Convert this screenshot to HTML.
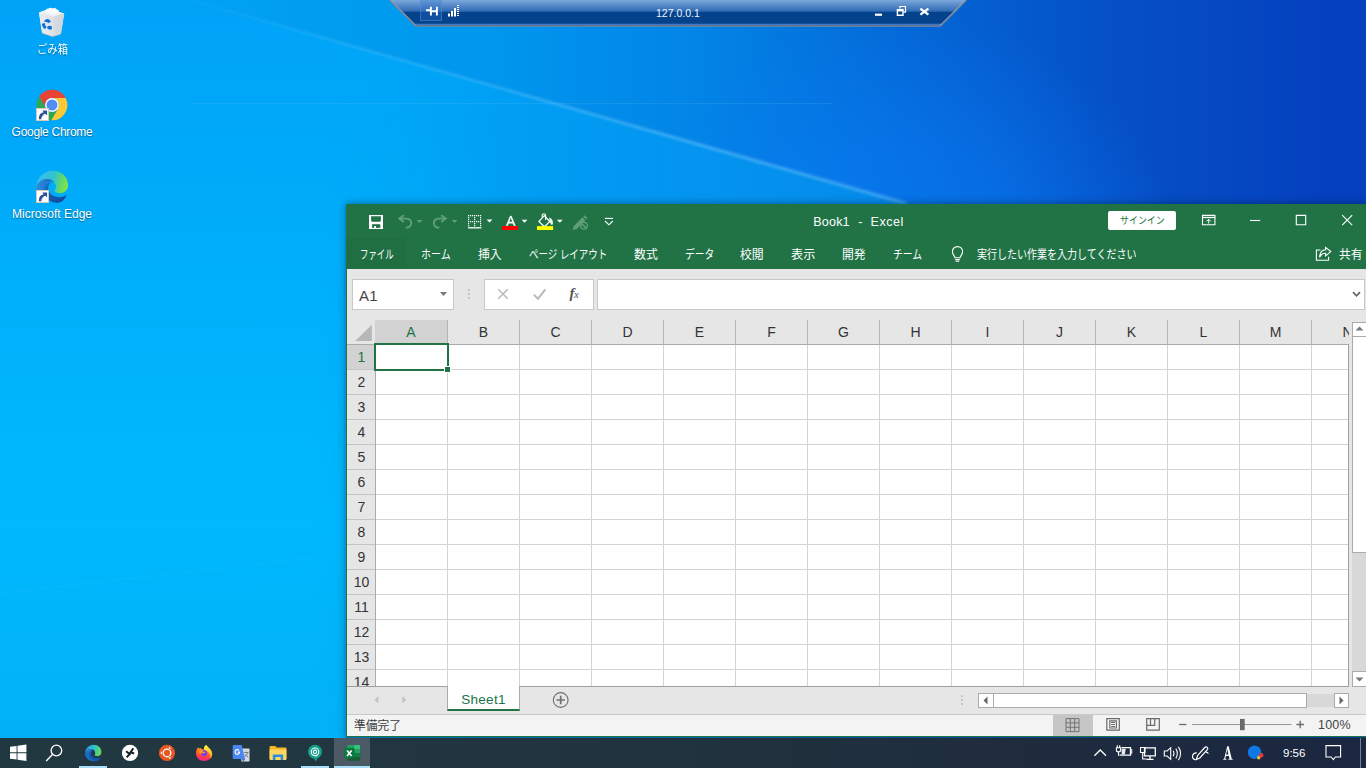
<!DOCTYPE html>
<html lang="ja">
<head>
<meta charset="utf-8">
<title>Book1 - Excel</title>
<style>
html,body{margin:0;padding:0}
body{width:1366px;height:768px;overflow:hidden;position:relative;background:#0790ea;
  font-family:"Liberation Sans",sans-serif;font-size:12px;color:#fff}
.abs{position:absolute}
svg{display:block;overflow:visible}
.jp{pointer-events:none}
.jp text{font-family:"Liberation Sans","Noto Sans CJK JP",sans-serif}
/* ---------- wallpaper ---------- */
#wall{left:0;top:0;width:1366px;height:768px;
  background:linear-gradient(90deg,#00a7f6 0,#00a7f6 25.3%,#009ff4 36.6%,#0494f0 51.2%,#058aea 66%,#058aea 100%)}
#wallL{left:0;top:0;width:520px;height:768px;-webkit-mask-image:linear-gradient(90deg,#000 0,#000 60%,transparent 100%);mask-image:linear-gradient(90deg,#000 0,#000 60%,transparent 100%);
  background:linear-gradient(180deg,#00a2f6 0,#00a4f8 30px,#00a9f9 156px,#00aefa 246px,#00b6fc 446px,#00b8fe 526px,#02b2f6 706px,#02b1f5 768px)}
#wallU{left:0;top:0;width:1366px;height:204px;clip-path:polygon(191px 0,1366px 0,1366px 204px,911px 204px);
  background:radial-gradient(circle at 900px 300px,rgba(10,130,255,.55) 0,rgba(10,130,255,.4) 150px,rgba(10,130,255,0) 290px),
  linear-gradient(90deg,#00a2f6 0,#00a2f6 14%,#009ef0 22%,#0096ee 36.6%,#0284e6 51.2%,#0468d6 65.9%,#0551c7 80.5%,#0540be 97.6%,#0540be 100%)}
/* ---------- remote-desktop connection bar ---------- */
#rdp{left:390px;top:0;width:576px;height:27px}
#rdp .t{font-size:10.5px;color:#eef4ff;left:266px;top:7px;line-height:12px;white-space:nowrap}
/* ---------- desktop icons ---------- */
.dlabel{color:#fff;font-size:12px;line-height:14px;white-space:nowrap;text-shadow:0 1px 1px rgba(0,0,0,.35),0 0 2px rgba(0,0,0,.18)}
/* ---------- excel ---------- */
#xl{left:346px;top:204px;width:1020px;height:534px;background:#e6e6e6;box-shadow:0 0 8px rgba(0,0,0,.4);color:#444}
#xl .green{left:0;top:0;width:1020px;height:65px;background:#217346}
#xl .filetab{left:0;top:34px;width:61px;height:31px;background:#1f6f43}
#xl .ttl{color:#fff;font-size:12.6px;line-height:16px;top:9.5px;white-space:nowrap}
#xl .signin{left:762px;top:7px;width:68px;height:19px;background:#fff;border-radius:2px}
.box{background:#fff;border:1px solid #c8c8c8;box-sizing:border-box}
#grid{left:1px;top:116px;width:1002px;height:367px;background:#fff;overflow:hidden}
.colh{top:0;height:24px;width:72px;text-align:center;font-size:14px;line-height:25px;color:#333;border-right:1px solid #b4b4b4;box-sizing:border-box}
.rowh{left:0;width:29px;height:25px;text-align:center;font-size:14px;line-height:24px;color:#333;border-bottom:1px solid #c4c4c4;box-sizing:border-box;background:#e6e6e6}
/* ---------- taskbar ---------- */
#tb{left:0;top:738px;width:1366px;height:30px;background:linear-gradient(90deg,#223841 0,#213640 30%,#20323d 52%,#1f2c3e 75%,#1b2640 100%)}
.ind{top:28px;height:2px;background:#a8defa}
</style>
</head>
<body>
<!-- ===== wallpaper ===== -->
<div id="wall" class="abs">
<div id="wallL" class="abs"></div>
<div id="wallU" class="abs"></div>
<svg class="abs" style="left:0;top:0" width="1366" height="768" viewBox="0 0 1366 768">
<defs>
<linearGradient id="wr1" gradientUnits="userSpaceOnUse" x1="190" y1="0" x2="900" y2="200"><stop offset="0" stop-color="#7fd0ff" stop-opacity=".05"/><stop offset=".25" stop-color="#7fd0ff" stop-opacity=".22"/><stop offset=".7" stop-color="#8fd0ff" stop-opacity=".34"/><stop offset="1" stop-color="#8fd0ff" stop-opacity=".3"/></linearGradient>
</defs>
<!-- main light ray -->
<polygon points="186.500,0 195,0 909.500,202 902,204.500" fill="url(#wr1)" style="filter:blur(1.300px)"/>
<!-- faint secondary rays -->
<rect x="192" y="103" width="640" height="1.2" fill="#8fd6ff" opacity=".13"/>
<polygon points="0,592 346,553 346,555 0,594.5" fill="#7fd8ff" opacity=".05"/>
</svg>
</div>
<div id="rdp" class="abs">
<svg class="abs" style="left:0;top:0" width="576" height="27" viewBox="0 0 576 27">
<defs>
<linearGradient id="rg" x1="0" y1="0" x2="0" y2="1"><stop offset="0" stop-color="#7ba8dc"/><stop offset="1" stop-color="#2d68b2"/></linearGradient>
</defs>
<polygon points="0,0 576,0 550,26 26,26" fill="#05428c"/>
<polygon points="0,0 576,0 564.3,11.7 11.7,11.7" fill="url(#rg)"/>
<path d="M24.300 24.300h527.400" stroke="#4f86d2" stroke-width="1" fill="none"/>
<path d="M-.4 0l26 26h524.800l26-26" stroke="#7d8795" stroke-width="1.300" fill="none"/>
<path d="M.9 0l25.300 25.300M575.100 0l-25.300 25.300" stroke="#9db4d6" stroke-width=".8" fill="none" opacity=".7"/>
<!-- pin button -->
<rect x="30.5" y="-1" width="21" height="21.5" fill="#2a72cc" fill-opacity=".3" stroke="#4f8fdc" stroke-opacity=".55"/>
<path d="M36 10.2h4.2M40.9 6.8v8.6M46.9 6.8v8.6M41 11.2h6" stroke="#fff" stroke-width="1.9" fill="none"/>
<!-- signal bars -->
<path d="M58 13.5h2v3h-2zM61 11h2v5.5h-2zM64 8h2v8.5h-2z" fill="#fff"/>
<path d="M68 5v11.5" stroke="#fff" stroke-width="2" stroke-dasharray="1 1" fill="none"/>
<!-- window buttons -->
<rect x="485" y="13.6" width="7" height="2.2" fill="#fff"/>
<path d="M507.4 9.6h5.6v5.6h-5.6z" fill="none" stroke="#fff" stroke-width="1.4"/><path d="M507.4 10.400h5.6" stroke="#fff" stroke-width="2"/>
<path d="M510 8.4V6.5h5.5v5.6h-2" fill="none" stroke="#fff" stroke-width="1.2"/>
<path d="M530.4 8.6l8 6M538.4 8.6l-8 6" stroke="#fff" stroke-width="2.3" fill="none"/>
</svg>
<div class="abs t">127.0.0.1</div>
</div>
<!-- ===== desktop icons ===== -->
<svg class="abs" style="left:36px;top:6px" width="32" height="32" viewBox="0 0 32 32" aria-label="Recycle Bin">
<defs><linearGradient id="binL" x1="0" y1="0" x2="1" y2="0"><stop offset="0" stop-color="#e9edf0"/><stop offset="1" stop-color="#dde2e6"/></linearGradient>
<linearGradient id="binR" x1="0" y1="0" x2="1" y2="0"><stop offset="0" stop-color="#d9dee3"/><stop offset="1" stop-color="#ccd3d9"/></linearGradient></defs>
<path d="M3 6.400L12.500 3l15.700 4.400-3.300 20.600-8.200 2.600-10.600-3.500z" fill="#e8ecef"/>
<path d="M3 6.400L12.500 3l15.700 4.400-11.100 3.300z" fill="#eef1f3"/>
<path d="M9.800 5.600c-.6-2 1-3.400 2.800-3 .8-1.200 3-1.300 3.900-.2 1.600-1 3.800-.5 4.200 1.200 1.600-.1 2.600 1 2.300 2.300l-6 2.600z" fill="#fbfcfd"/>
<path d="M3 6.400l14.100 4.300-.4 19.900-10.600-3.500z" fill="url(#binL)"/>
<path d="M17.100 10.700l11.100-3.300-3.300 20.600-8.200 2.600z" fill="url(#binR)"/>
<path d="M6.100 27.100l10.600 3.500 8.200-2.600" stroke="#c9b49c" stroke-width=".7" fill="none" opacity=".55"/>
<g fill="#1270d8"><path d="M8 15.600c.7-2 2.700-3 4.500-2.400 1.100.4 2 1.300 2.400 2.500l-2.900 1.500c-.3-.9-1-1.400-1.800-1.200z"/><path d="M5.900 17.800l3-.9c0 1.700.6 3.100 1.700 4.100l-1.800 2.200c-1.900-1.200-2.900-3.200-2.900-5.400z"/><path d="M10.800 21.300l2.300-1.800c.7.700 1.600.8 2.500.2l.4 3.400c-1.900 1.100-4 .6-5.200-1.800z"/></g>
</svg>
<svg class="abs jp" style="left:34.800px;top:40.800px;filter:drop-shadow(0 1px 1px rgba(0,0,0,.35))" width="35" height="16" viewBox="0 0 35 16" role="img" aria-label="ごみ箱"><text x="2" y="13" font-size="12" fill="#fff" textLength="31" lengthAdjust="spacingAndGlyphs">ごみ箱</text></svg>

<svg class="abs" style="left:36px;top:89px" width="32" height="32" viewBox="0 0 32 32" aria-label="Google Chrome">
<path fill="#e94335" d="M10.02,19.45 L3.20,7.62 A15.3,15.3 0 0 1 29.66,9.10 L16.00,9.10 A6.9,6.9 0 0 0 10.02,19.45 Z"/>
<path fill="#fcc934" d="M16.00,9.10 L29.66,9.10 A15.3,15.3 0 0 1 15.15,31.28 L21.98,19.45 A6.9,6.9 0 0 0 16.00,9.10 Z"/>
<path fill="#2da94f" d="M21.98,19.45 L15.15,31.28 A15.3,15.3 0 0 1 3.20,7.62 L10.02,19.45 A6.9,6.9 0 0 0 21.98,19.45 Z"/>
<circle cx="16" cy="16" r="6.9" fill="#fff"/><circle cx="16" cy="16" r="5.5" fill="#4f8df5"/>
<g><rect x=".5" y="19.500" width="12" height="12" fill="#fff" stroke="#d9c9b6" stroke-width="1"/><path d="M3 30.300c-.3-4.300 1.700-6.700 4.900-7.100L6.200 21.500h4.900v4.900L9.400 24.700c-2.300.4-3.800 2.100-3.900 5.600z" fill="#27509b"/><path d="M5.500 30.300c.1-2.400 1.100-3.600 2.700-4" stroke="#c9d3e6" stroke-width=".8" fill="none"/></g>
</svg>
<div class="abs dlabel" style="left:2px;top:125px;width:100px;text-align:center;letter-spacing:-.3px">Google Chrome</div>

<svg class="abs" style="left:36px;top:171px" width="32" height="32" viewBox="0 0 32 32" aria-label="Microsoft Edge">
<defs>
<linearGradient id="eg1" x1="0" y1=".4" x2="1" y2=".6"><stop offset="0" stop-color="#3bbcf0"/><stop offset=".5" stop-color="#30c4cc"/><stop offset=".85" stop-color="#6fdc58"/><stop offset="1" stop-color="#86e24a"/></linearGradient>
<linearGradient id="eg2" x1="0" y1="0" x2="1" y2="1"><stop offset="0" stop-color="#1b74cc"/><stop offset=".5" stop-color="#1558b0"/><stop offset="1" stop-color="#114a9a"/></linearGradient>
<linearGradient id="eg3" x1="0" y1="0" x2="1" y2="0"><stop offset="0" stop-color="#2e8fde"/><stop offset="1" stop-color="#1666c2"/></linearGradient>
</defs>
<path d="M.2 16.500C.5 7 7.500-.2 17-.2c9 0 15.100 6.700 15.100 14.200 0 4.500-3.100 8.200-7.900 8.200-3.200 0-5.500-1.400-5.500-2.300 0-.7 1.200-1.600 1.200-4.100C19.900 12 16.500 8 11 8 5 8 .7 12.500.2 16.500z" fill="url(#eg1)"/>
<path d="M.2 16.500C.7 12.500 5 8 11 8c3 0 5.500 1.200 7 3-1.200-.6-2.500-.8-3.800-.5-3.700.8-5.900 4-5.900 8 0 .5 0 1.100.1 1.500H.5C.3 18.900.2 17.700.2 16.500z" fill="url(#eg3)"/>
<path d="M8.300 18.500c0 7 5.200 13.400 12.200 13.400 4.500 0 7.800-2.700 9.700-6.700.3-.7-.4-1.200-1-.8-1.600 1.100-3.700 1.800-5.900 1.800-5.800 0-11.100-3.700-11.100-9.200 0-2.500 1.300-4.700 3.100-6-4.300 0-7 3.500-7 7.500z" fill="url(#eg2)"/>
<g><rect x=".5" y="19.500" width="12" height="12" fill="#fff" stroke="#d9c9b6" stroke-width="1"/><path d="M3 30.300c-.3-4.300 1.700-6.700 4.900-7.100L6.200 21.500h4.900v4.900L9.400 24.700c-2.300.4-3.800 2.100-3.900 5.600z" fill="#27509b"/><path d="M5.500 30.300c.1-2.400 1.100-3.600 2.700-4" stroke="#c9d3e6" stroke-width=".8" fill="none"/></g>
</svg>
<div class="abs dlabel" style="left:2px;top:207px;width:100px;text-align:center">Microsoft Edge</div>
<!-- ===== Excel window ===== -->
<div id="xl" class="abs">
<div class="abs green"></div>
<div class="abs filetab"></div>

<!-- quick access toolbar -->
<svg class="abs" style="left:0;top:0" width="280" height="34" viewBox="0 0 280 34">
<!-- save -->
<path d="M23 11h14v14H23z" fill="#fff"/>
<path d="M25.100 12.300h9.800v4.500l-.9.900h-8l-.9-.9z" fill="#217346"/>
<path d="M26.100 20.200h8.200v3.700h-8.200z" fill="#217346"/>
<path d="M28.200 21.900H30V24h-1.800z" fill="#fff"/>
<!-- undo (disabled) -->
<g stroke="#5f9f7c" fill="none" stroke-width="1.900"><path d="M57.800 11.200l-4.600 3.400 4.600 3.400"/><path d="M53.600 14.600H60c3.500 0 5.200 2.200 5.200 4.600 0 2.800-2.200 4.200-5.400 4.600"/></g>
<path d="M70.600 16l2.900 2.900 2.900-2.900z" fill="#5f9f7c"/>
<!-- redo (disabled) -->
<g stroke="#5f9f7c" fill="none" stroke-width="1.900"><path d="M95.200 11.200l4.600 3.400-4.600 3.400"/><path d="M99.400 14.600H93c-3.500 0-5.200 2.200-5.200 4.600 0 2.800 2.200 4.200 5.400 4.600"/></g>
<path d="M105.700 16l2.900 2.900 2.900-2.900z" fill="#5f9f7c"/>
<!-- borders -->
<path d="M122 11h1.2v1.2h-1.2zM124 11h1.2v1.2h-1.2zM126 11h1.2v1.2h-1.2zM128 11h1.2v1.2h-1.2zM130 11h1.2v1.2h-1.2zM132 11h1.2v1.2h-1.2zM134 11h1.2v1.2h-1.2zM122 13h1.2v1.2h-1.2zM128 13h1.2v1.2h-1.2zM134 13h1.2v1.2h-1.2zM122 15h1.2v1.2h-1.2zM128 15h1.2v1.2h-1.2zM134 15h1.2v1.2h-1.2zM122 17h1.2v1.2h-1.2zM124 17h1.2v1.2h-1.2zM126 17h1.2v1.2h-1.2zM128 17h1.2v1.2h-1.2zM130 17h1.2v1.2h-1.2zM132 17h1.2v1.2h-1.2zM134 17h1.2v1.2h-1.2zM122 19h1.2v1.2h-1.2zM128 19h1.2v1.2h-1.2zM134 19h1.2v1.2h-1.2zM122 21h1.2v1.2h-1.2zM128 21h1.2v1.2h-1.2zM134 21h1.2v1.2h-1.2z" fill="#fff"/>
<path d="M122 23.800h13.400" stroke="#fff" stroke-width="1.300"/>
<path d="M140.600 15.600l2.900 2.900 2.900-2.900z" fill="#fff"/>
<!-- font colour -->
<path d="M160.200 21.800l4-9.700h1.200l4 9.700h-1.400l-1-2.600h-4.500l-1 2.600zm2.800-3.800h3.600l-1.800-4.700z" fill="#fff" stroke="#fff" stroke-width=".45"/>
<rect x="156" y="22" width="16" height="4" fill="#ff0000"/>
<path d="M175.600 15.800l2.900 2.900 2.900-2.900z" fill="#fff"/>
<!-- fill colour -->
<path d="M198.300 11.700l5.500 5.800-5.400 5.300-5.500-5.300z" fill="none" stroke="#fff" stroke-width="1.200"/>
<path d="M196.200 13.600V11c0-1.600 3.400-1.600 3.400 0v5" fill="none" stroke="#fff" stroke-width="1.100"/>
<path d="M203.200 13.600c2.300.8 4.100 2.900 3.700 6.400-.4.900-1.300 1-1.900.6l-1.400-3.300z" fill="#f2f5f3"/>
<rect x="191" y="22.100" width="16.100" height="3.900" fill="#ffff00"/>
<path d="M210.900 15.800l2.900 2.900 2.900-2.900z" fill="#fff"/>
<!-- touch/mouse mode (disabled) -->
<g><path d="M226.500 25.700l1.100-3.200 8.900-9.200 2.900 2.800-9 9.200z" fill="#5f9f7c"/><path d="M237.300 12.500l1.300-1.300 2.900 2.800-1.300 1.300z" fill="#5f9f7c"/><circle cx="238" cy="21.800" r="3.400" fill="#217346" stroke="#5f9f7c" stroke-width="1.300"/><path d="M235.800 19.800l4.300 4.100" stroke="#5f9f7c" stroke-width="1.600"/></g>
<!-- customise -->
<path d="M258.800 14.400h8.300" stroke="#fff" stroke-width="1.100"/><path d="M259 17l3.900 3.800 3.900-3.800" stroke="#fff" stroke-width="1.100" fill="none"/>
</svg>

<div class="abs ttl" style="left:467.300px;letter-spacing:.15px">Book1</div>
<div class="abs ttl" style="left:512.300px">-</div>
<div class="abs ttl" style="left:524.500px;letter-spacing:.5px">Excel</div>

<div class="abs signin"></div>
<svg class="abs jp" style="left:771.500px;top:9.300px;" width="48.8" height="14.6" viewBox="0 0 48.8 14.6" role="img" aria-label="サインイン"><text x="2" y="11.400" font-size="10" fill="#217346" textLength="44.800" lengthAdjust="spacingAndGlyphs">サインイン</text></svg>

<!-- window controls -->
<svg class="abs" style="left:840px;top:0" width="180" height="34" viewBox="840 0 180 34">
<g fill="none" stroke="#fff" stroke-width="1.100">
<path d="M856.500 11.400h12.400v9.400h-12.400z"/><path d="M856 13.500h13.400" stroke-width="1.300"/>
<path d="M862.700 19.500v-4.200M860.600 17.300l2.100-2.100 2.100 2.100" stroke-width="1"/>
<path d="M904 16.500h10.200"/>
<path d="M950.300 11.400h9.400v9.400h-9.400z"/>
<path d="M996.200 11.200l10 10M1006.200 11.200l-10 10"/>
</g>
</svg>

<!-- ribbon tabs -->
<svg class="abs jp" style="left:11.700px;top:41.500px;" width="37.6" height="15.9" viewBox="0 0 37.6 15.9" role="img" aria-label="ファイル"><text x="2" y="12.800" font-size="12" fill="#fff" textLength="33.600" lengthAdjust="spacingAndGlyphs">ファイル</text></svg>
<svg class="abs jp" style="left:72.700px;top:41.500px;" width="33.8" height="15.9" viewBox="0 0 33.8 15.9" role="img" aria-label="ホーム"><text x="2" y="12.800" font-size="12" fill="#fff" textLength="29.800" lengthAdjust="spacingAndGlyphs">ホーム</text></svg>
<svg class="abs jp" style="left:129.900px;top:41.500px;" width="27.6" height="15.9" viewBox="0 0 27.6 15.9" role="img" aria-label="挿入"><text x="2" y="12.800" font-size="12" fill="#fff" textLength="23.600" lengthAdjust="spacingAndGlyphs">挿入</text></svg>
<svg class="abs jp" style="left:181px;top:41.500px;" width="82.3" height="15.9" viewBox="0 0 82.3 15.9" role="img" aria-label="ページ レイアウト"><text x="2" y="12.800" font-size="12" fill="#fff" textLength="78.300" lengthAdjust="spacingAndGlyphs">ページ レイアウト</text></svg>
<svg class="abs jp" style="left:286px;top:41.500px;" width="27.8" height="15.9" viewBox="0 0 27.8 15.9" role="img" aria-label="数式"><text x="2" y="12.800" font-size="12" fill="#fff" textLength="23.800" lengthAdjust="spacingAndGlyphs">数式</text></svg>
<svg class="abs jp" style="left:336.500px;top:41.500px;" width="33.1" height="15.9" viewBox="0 0 33.1 15.9" role="img" aria-label="データ"><text x="2" y="12.800" font-size="12" fill="#fff" textLength="29.100" lengthAdjust="spacingAndGlyphs">データ</text></svg>
<svg class="abs jp" style="left:391.700px;top:41.500px;" width="27.7" height="15.9" viewBox="0 0 27.7 15.9" role="img" aria-label="校閲"><text x="2" y="12.800" font-size="12" fill="#fff" textLength="23.700" lengthAdjust="spacingAndGlyphs">校閲</text></svg>
<svg class="abs jp" style="left:442.800px;top:41.500px;" width="28.3" height="15.9" viewBox="0 0 28.3 15.9" role="img" aria-label="表示"><text x="2" y="12.800" font-size="12" fill="#fff" textLength="24.300" lengthAdjust="spacingAndGlyphs">表示</text></svg>
<svg class="abs jp" style="left:494.300px;top:41.500px;" width="27.6" height="15.9" viewBox="0 0 27.6 15.9" role="img" aria-label="開発"><text x="2" y="12.800" font-size="12" fill="#fff" textLength="23.600" lengthAdjust="spacingAndGlyphs">開発</text></svg>
<svg class="abs jp" style="left:544.800px;top:41.500px;" width="33.1" height="15.9" viewBox="0 0 33.1 15.9" role="img" aria-label="チーム"><text x="2" y="12.800" font-size="12" fill="#fff" textLength="29.100" lengthAdjust="spacingAndGlyphs">チーム</text></svg>
<svg class="abs" style="left:603px;top:40px" width="18" height="20" viewBox="0 0 18 20"><g fill="none" stroke="#fff" stroke-width="1.100"><path d="M6 13.800c0-1.700-2.600-3.200-2.600-6.100C3.400 4.600 5.700 2.600 8.500 2.600s5.100 2 5.100 5.100c0 2.900-2.600 4.400-2.600 6.100z"/><path d="M6.200 15.600h4.600M6.800 17.300h3.400"/></g></svg>
<svg class="abs jp" style="left:629.400px;top:41.500px;" width="163.6" height="15.9" viewBox="0 0 163.6 15.9" role="img" aria-label="実行したい作業を入力してください"><text x="2" y="12.800" font-size="12" fill="#fff" textLength="159.600" lengthAdjust="spacingAndGlyphs">実行したい作業を入力してください</text></svg>
<svg class="abs" style="left:968px;top:41px" width="20" height="18" viewBox="0 0 20 18"><g fill="none" stroke="#fff" stroke-width="1.100"><path d="M6.400 5H2.400v10.300h12.200v-3.600"/><path d="M11.600 2.300l5.200 4.300-5.200 4.300V8.300C8.500 8.300 6.600 9.700 5.600 12.200 5.800 8 7.900 5 11.600 4.800z"/></g></svg>
<svg class="abs jp" style="left:991px;top:41.500px;" width="27.5" height="15.9" viewBox="0 0 27.5 15.9" role="img" aria-label="共有"><text x="2" y="12.800" font-size="12" fill="#fff" textLength="23.500" lengthAdjust="spacingAndGlyphs">共有</text></svg>

<!-- formula bar -->
<div class="abs box" style="left:6px;top:75px;width:102px;height:31px"></div>
<div class="abs" style="left:13px;top:83px;font-size:15px;line-height:18px;color:#444;letter-spacing:.2px">A1</div>
<svg class="abs" style="left:93px;top:87px" width="9" height="6" viewBox="0 0 9 6"><path d="M1 1h7L4.500 5z" fill="#767676"/></svg>
<svg class="abs" style="left:121px;top:84px" width="4" height="12" viewBox="0 0 4 12"><g fill="#a3a3a3"><rect x="1.200" y="1.500" width="1.400" height="1.400"/><rect x="1.200" y="5.400" width="1.400" height="1.400"/><rect x="1.200" y="9.300" width="1.400" height="1.400"/></g></svg>
<div class="abs box" style="left:138px;top:75px;width:110px;height:31px"></div>
<svg class="abs" style="left:138px;top:75px" width="110" height="31" viewBox="0 0 110 31">
<path d="M14.200 10.200l9.600 9.600M23.800 10.200l-9.600 9.600" stroke="#b9b9b9" stroke-width="1.500" fill="none"/>
<path d="M49.800 15.600l4.200 4.100 7.400-9.300" stroke="#b9b9b9" stroke-width="2" fill="none"/>
</svg>
<div class="abs" style="left:223.500px;top:80px;font-family:'Liberation Serif',serif;font-style:italic;font-size:15px;line-height:18px;color:#555;letter-spacing:-.5px"><b>f</b><span style="font-size:11px">x</span></div>
<div class="abs box" style="left:251px;top:75px;width:768px;height:31px"></div>
<svg class="abs" style="left:1006px;top:87px" width="9" height="7" viewBox="0 0 9 7"><path d="M1 1.200l3.500 3.600L8 1.200" stroke="#666" stroke-width="1.700" fill="none"/></svg>

<!-- grid -->
<div id="grid" class="abs">
<div class="abs" style="left:0;top:0;width:1002px;height:25px;background:#e6e6e6;border-bottom:1px solid #ababab;box-sizing:border-box"></div>
<svg class="abs" style="left:7px;top:4px" width="19" height="18" viewBox="0 0 19 18"><path d="M17.800 .8v16.200H1.200z" fill="#b7b7b7"/></svg>
<div class="abs colh" style="left:28px;width:73px;background:#d2d2d2;color:#217346;border-bottom:0">A</div>
<div class="abs colh" style="left:101px">B</div>
<div class="abs colh" style="left:173px">C</div>
<div class="abs colh" style="left:245px">D</div>
<div class="abs colh" style="left:317px">E</div>
<div class="abs colh" style="left:389px">F</div>
<div class="abs colh" style="left:461px">G</div>
<div class="abs colh" style="left:533px">H</div>
<div class="abs colh" style="left:605px">I</div>
<div class="abs colh" style="left:677px">J</div>
<div class="abs colh" style="left:749px">K</div>
<div class="abs colh" style="left:821px">L</div>
<div class="abs colh" style="left:893px">M</div>
<div class="abs colh" style="left:965px">N</div>
<div class="abs" style="left:29px;top:25px;width:973px;height:342px;background-image:repeating-linear-gradient(90deg,transparent 0,transparent 71px,#d4d4d4 71px,#d4d4d4 72px),repeating-linear-gradient(180deg,transparent 0,transparent 24px,#d4d4d4 24px,#d4d4d4 25px)"></div>
<div class="abs rowh" style="top:25px;background:#d2d2d2;color:#217346">1</div>
<div class="abs rowh" style="top:50px">2</div>
<div class="abs rowh" style="top:75px">3</div>
<div class="abs rowh" style="top:100px">4</div>
<div class="abs rowh" style="top:125px">5</div>
<div class="abs rowh" style="top:150px">6</div>
<div class="abs rowh" style="top:175px">7</div>
<div class="abs rowh" style="top:200px">8</div>
<div class="abs rowh" style="top:225px">9</div>
<div class="abs rowh" style="top:250px">10</div>
<div class="abs rowh" style="top:275px">11</div>
<div class="abs rowh" style="top:300px">12</div>
<div class="abs rowh" style="top:325px">13</div>
<div class="abs rowh" style="top:350px">14</div>
<div class="abs" style="left:28px;top:25px;width:1px;height:342px;background:#ababab"></div>
<div class="abs" style="left:1001px;top:24px;width:1px;height:343px;background:#9f9f9f"></div>
<div class="abs" style="left:0;top:366px;width:1002px;height:1px;background:#9f9f9f"></div>
</div>
<!-- selection A1 -->
<div class="abs" style="left:28px;top:139px;width:71px;height:24px;border:2px solid #217346"></div>
<div class="abs" style="left:98px;top:162px;width:5px;height:5px;background:#217346;border:1px solid #fff"></div>

<!-- vertical scrollbar -->
<div class="abs" style="left:1006px;top:118px;width:14px;height:365px;background:#d8d8d8"></div>
<div class="abs box" style="left:1006px;top:118px;width:16px;height:15px;border-color:#ababab"></div>
<svg class="abs" style="left:1009px;top:122px" width="9" height="5" viewBox="0 0 9 5"><path d="M.5 4.500h8L4.500.5z" fill="#777"/></svg>
<div class="abs box" style="left:1006px;top:132px;width:16px;height:217px;border-color:#ababab"></div>
<div class="abs box" style="left:1006px;top:467px;width:16px;height:16px;border-color:#ababab"></div>
<svg class="abs" style="left:1009px;top:473px" width="9" height="5" viewBox="0 0 9 5"><path d="M.5.500h8L4.500 4.500z" fill="#777"/></svg>

<!-- sheet tab bar -->
<svg class="abs" style="left:24px;top:490px" width="40" height="12" viewBox="0 0 40 12"><path d="M8.300 2.200v7L4.300 5.700zM32.300 2.200v7l4-3.500z" fill="#c3c3c3"/></svg>
<div class="abs" style="left:101px;top:482px;width:73px;height:25px;background:#fff;border-left:1px solid #ababab;border-right:1px solid #ababab;border-bottom:2px solid #217346;box-sizing:border-box"></div>
<div class="abs" style="left:101px;top:488px;width:73px;text-align:center;font-size:13.500px;line-height:16px;color:#217346;letter-spacing:.3px">Sheet1</div>
<svg class="abs" style="left:205px;top:486px" width="20" height="20" viewBox="0 0 20 20"><circle cx="9.700" cy="10" r="7.400" fill="none" stroke="#6f6f6f" stroke-width="1.100"/><path d="M9.700 5.800v8.400M5.500 10h8.400" stroke="#6f6f6f" stroke-width="1.700"/></svg>
<svg class="abs" style="left:614px;top:490px" width="4" height="12" viewBox="0 0 4 12"><g fill="#a3a3a3"><rect x="1.200" y="1.500" width="1.400" height="1.400"/><rect x="1.200" y="5.400" width="1.400" height="1.400"/><rect x="1.200" y="9.300" width="1.400" height="1.400"/></g></svg>
<!-- horizontal scrollbar -->
<div class="abs" style="left:632px;top:490px;width:371px;height:13px;background:#d8d8d8"></div>
<div class="abs box" style="left:632px;top:489px;width:16px;height:15px;border-color:#ababab"></div>
<svg class="abs" style="left:637px;top:492px" width="5" height="9" viewBox="0 0 5 9"><path d="M4.500.500v8L.5 4.500z" fill="#666"/></svg>
<div class="abs box" style="left:647px;top:489px;width:314px;height:15px;border-color:#ababab"></div>
<div class="abs box" style="left:988px;top:489px;width:15px;height:15px;border-color:#ababab"></div>
<svg class="abs" style="left:993px;top:492px" width="5" height="9" viewBox="0 0 5 9"><path d="M.5.500v8l4-4z" fill="#666"/></svg>

<!-- status bar -->
<div class="abs" style="left:1px;top:510px;width:1019px;height:1px;background:#c9c9c9"></div>
<div class="abs" style="left:1px;top:511px;width:1019px;height:21px;background:#f3f3f3"></div>
<svg class="abs jp" style="left:6px;top:514px;" width="51.2" height="15.4" viewBox="0 0 51.2 15.4" role="img" aria-label="準備完了"><text x="2" y="12.400" font-size="12" fill="#3c3c3c" textLength="47.200" lengthAdjust="spacingAndGlyphs">準備完了</text></svg>
<div class="abs" style="left:707px;top:511px;width:40px;height:21px;background:#c6c6c6"></div>
<svg class="abs" style="left:700px;top:511px" width="320" height="21" viewBox="0 0 320 21">
<g fill="none" stroke="#6a6a6a" stroke-width="1.100">
<path d="M20 3.600h13v13H20zM24.300 3.600v13M28.700 3.600v13M20 7.900h13M20 12.300h13" stroke="#737373" stroke-width="1"/>
<path d="M60.800 3.700h12.500v11.500H60.800z" stroke-width="1.200"/><path d="M63.800 5.900h6.600v7.100h-6.600z" stroke-width="1.100"/><path d="M65.200 7.500h3.800M65.200 9.500h3.800M65.200 11.500h3.800" stroke-width="1"/>
<path d="M100.700 3.700h12.600v11.500h-12.600z" stroke-width="1.200"/><path d="M104.500 3.700v6.700M108.700 3.700v6.700h-8" stroke-width="1.200"/>
<path d="M133.200 9.500h7.200" stroke-width="1.300"/>
<path d="M146 9.500h99.500" stroke="#9a9a9a" stroke-width="1"/>
<path d="M250.500 9.500h7.400M254.200 5.800v7.400" stroke-width="1.300"/>
</g>
<rect x="194" y="3.900" width="4.700" height="11.300" fill="#6a6a6a"/>
</svg>
<div class="abs" style="left:972px;top:513px;font-size:12.500px;line-height:16px;color:#444;letter-spacing:.2px">100%</div>

<!-- window borders -->
<div class="abs" style="left:0;top:65px;width:1px;height:469px;background:#217346"></div>
<div class="abs" style="left:0;top:532px;width:1020px;height:1px;background:#217346"></div>
<div class="abs" style="left:0;top:533px;width:1020px;height:1px;background:linear-gradient(90deg,#0070b4 0,#0060a8 35%,#044a98 60%,#033a8c 100%)"></div>
</div>
<!-- ===== taskbar ===== -->
<div id="tb" class="abs">
<div class="abs" style="left:334px;top:0;width:36px;height:30px;background:#4b5a64"></div>
<div class="abs ind" style="left:79px;width:28px"></div>
<div class="abs ind" style="left:301px;width:28px"></div>
<div class="abs ind" style="left:334px;width:36px"></div>
<svg class="abs" style="left:0;top:0" width="380" height="30" viewBox="0 0 380 30">
<defs>
<linearGradient id="te1" x1="0" y1=".4" x2="1" y2=".6"><stop offset="0" stop-color="#2c9fe8"/><stop offset=".55" stop-color="#2fc4c4"/><stop offset="1" stop-color="#6fdc4a"/></linearGradient>
<linearGradient id="tff" x1=".6" y1="0" x2=".4" y2="1"><stop offset="0" stop-color="#ffb02c"/><stop offset=".4" stop-color="#ff7a22"/><stop offset=".75" stop-color="#ff3a4e"/><stop offset="1" stop-color="#f0209a"/></linearGradient>
<linearGradient id="tfy" x1=".3" y1="0" x2=".7" y2="1"><stop offset="0" stop-color="#fff03f"/><stop offset=".6" stop-color="#ffc92f"/><stop offset="1" stop-color="#ff9a28"/></linearGradient>
<linearGradient id="txl" x1="0" y1="0" x2="0" y2="1"><stop offset="0" stop-color="#21a366"/><stop offset=".5" stop-color="#107c41"/><stop offset="1" stop-color="#185c37"/></linearGradient>
</defs>
<!-- start -->
<path d="M10 8.800l6.600-.9v6.400H10zM17.500 7.800l8.900-1.300v7.800h-8.900zM10 15.200h6.600v6.400L10 20.700zM17.500 15.200h8.900V23l-8.900-1.300z" fill="#fff"/>
<!-- search -->
<circle cx="56.400" cy="12.500" r="5.300" fill="none" stroke="#fff" stroke-width="1.300"/><path d="M52.700 16.300l-6.500 6.600" stroke="#fff" stroke-width="1.400"/>
<!-- edge -->
<g transform="translate(85 6.800) scale(.5125)">
<path d="M.2 16.500C.5 7 7.500-.2 17-.2c9 0 15.100 6.700 15.100 14.200 0 4.500-3.100 8.200-7.900 8.200-3.200 0-5.500-1.400-5.500-2.300 0-.7 1.200-1.600 1.200-4.100C19.900 12 16.500 8 11 8 5 8 .7 12.500.2 16.500z" fill="url(#te1)"/>
<path d="M.2 16.500C.7 12.500 5 8 11 8c3 0 5.500 1.200 7 3-1.200-.6-2.500-.8-3.800-.5-3.700.8-5.900 4-5.900 8 0 .5 0 1.100.1 1.500l-2 6.500C2.500 24 .2 20.700.2 16.500z" fill="#1f7ad4"/>
<path d="M8.300 18.500c0 7 5.200 13.400 12.200 13.400 4.500 0 7.800-2.700 9.700-6.700.3-.7-.4-1.200-1-.8-1.600 1.100-3.700 1.800-5.900 1.800-5.800 0-11.100-3.700-11.100-9.200 0-2.500 1.300-4.700 3.100-6-4.300 0-7 3.500-7 7.500z" fill="#1457ae"/>
<path d="M.2 16.500c0 8.500 6.800 15.500 15.800 15.500 1.600 0 3.100-.2 4.500-.6-7-.2-12.200-6-12.200-12.900 0-1.500.4-3 1-4.200C5 13 1.500 14 .2 16.500z" fill="#1a6cc8"/>
</g>
<!-- remote desktop -->
<circle cx="130" cy="14.900" r="8.100" fill="#fff"/>
<path d="M126.100 13.300l3.700 2.800-3.200 3.200M133.300 10.300l-2.700 4 3.500 1.200" stroke="#16202a" stroke-width="2" fill="none"/>
<!-- ubuntu -->
<circle cx="167" cy="14.900" r="8.100" fill="#e95420"/>
<circle cx="167" cy="14.900" r="3.800" fill="none" stroke="#fff" stroke-width="1.400"/>
<circle cx="161.500" cy="14.900" r="1.300" fill="#fff" stroke="#e95420" stroke-width=".7"/><circle cx="169.800" cy="10.100" r="1.300" fill="#fff" stroke="#e95420" stroke-width=".7"/><circle cx="169.800" cy="19.700" r="1.300" fill="#fff" stroke="#e95420" stroke-width=".7"/>
<!-- firefox -->
<path d="M196 15.500c0-3 .8-4.500 2-5.900l1 1 1.200-.8 1.600 1.200c.7.400 1.600.600 2.100.200.100-2.200 1.100-3.700 2.400-4.300.7 1.600 2.500 2.500 3.500 3.900 1.400 1.600 2.400 3.200 2.400 5.200 0 4-3.600 7-8.100 7S196 20 196 15.500z" fill="url(#tff)"/>
<path d="M203.900 11.200c.100-2.200 1.100-3.700 2.400-4.300.7 1.600 2.500 2.500 3.500 3.900 1.400 1.600 2.400 3.200 2.400 5.200 0 1.900-.8 3.500-2 4.700.6-3.700-1.200-7.200-4.400-8.300z" fill="url(#tfy)"/>
<circle cx="204.300" cy="15.200" r="2.900" fill="#7340e6"/>
<path d="M199.300 12.600c1.600-.6 3.200 0 4 1 .6.700 1.700.8 2.500.6-.8 1-2.100 1.300-3 1-1.300-.3-2.100.1-2.700 1-.7-1.100-1-2.400-.8-3.600z" fill="#ff9620"/>
<!-- translate -->
<path d="M239.500 10.500h9c.6 0 1 .4 1 1v11c0 .6-.4 1-1 1h-7z" fill="#d5d9de"/>
<path d="M233.700 7h8l3.300 14h-11.300c-.6 0-1-.4-1-1V8c0-.6.400-1 1-1z" fill="#4a86f0"/>
<path d="M240 13.500h-2.200v1.200h1c-.2.700-.7 1.100-1.400 1.100-1 0-1.700-.8-1.700-1.800s.7-1.800 1.700-1.800c.5 0 .9.200 1.200.5l.8-.8c-.5-.5-1.200-.8-2-.8-1.600 0-2.900 1.300-2.900 2.900s1.300 2.900 2.900 2.900c1.700 0 2.700-1.200 2.700-2.800 0-.2 0-.4-.1-.6z" fill="#fff"/>
<path d="M244 14.500h4.500M246.200 13.500v1M247.600 14.700c-.4 1.800-1.700 3.300-3.400 4.200M245 16.300c.6 1.100 1.700 2.100 3.100 2.700" stroke="#6d7681" stroke-width=".9" fill="none"/>
<path d="M241.700 21l1.900 2.500L245 21z" fill="#3367d6"/>
<!-- explorer -->
<path d="M269.600 9c0-.6.400-1 1-1h4.600l1.500 1.600h8.700c.6 0 1 .4 1 1V21h-16.800z" fill="#f9b625"/>
<path d="M269.600 11.400h16.800V21c0 .6-.4 1-1 1h-14.800c-.6 0-1-.4-1-1z" fill="#ffd75e"/>
<path d="M272.800 16.500h10.400V22h-2.600v-3h-5.200v3h-2.600z" fill="#2b8be6"/>
<!-- teal app -->
<circle cx="315" cy="13.700" r="7" fill="#12a08c"/><path d="M313.600 19.800l2.100 3.700 2.300-4.300z" fill="#12a08c"/>
<circle cx="315" cy="13.800" r="3.800" fill="none" stroke="#fff" stroke-width="1.100"/><circle cx="315" cy="13.800" r="1.700" fill="none" stroke="#fff" stroke-width="1.100"/><path d="M315.500 17.800h1.800" stroke="#fff" stroke-width="1"/>
<!-- excel -->
<rect x="347.200" y="7" width="12.900" height="15.800" rx="1" fill="#185c37"/>
<path d="M347.200 8c0-.6.400-1 1-1h5.500v4h-6.500z" fill="#21a366"/><path d="M353.700 7h5.400c.6 0 1 .4 1 1v3h-6.400z" fill="#33c481"/>
<path d="M347.200 11h6.500v4h-6.500z" fill="#107c41"/><path d="M353.700 11h6.400v4h-6.400z" fill="#21a366"/>
<path d="M347.200 15h12.900v4h-12.900z" fill="#107c41"/>
<rect x="344" y="10" width="10.600" height="10.200" rx=".9" fill="#107c41"/><rect x="344" y="10" width="10.600" height="10.200" rx=".9" fill="#0b6b36" opacity=".25"/>
<path d="M347 12.400l4.600 5.600M351.600 12.400L347 18" stroke="#fff" stroke-width="1.600"/>
</svg>

<svg class="abs" style="left:1086px;top:0" width="280" height="30" viewBox="1086 0 280 30">
<g fill="none" stroke="#fff" stroke-width="1.300">
<path d="M1094.400 17.700l5.800-5.700 5.800 5.700"/>
<!-- battery / plug -->
<path d="M1121.500 9.600h9v7.600h-11"/><path d="M1130.500 11.500h1.300v3.800h-1.300" stroke-width="1"/><path d="M1121.600 10.800h4.200l-1 5.600h-3.200z" fill="#e8ecf2" stroke="none"/>
<path d="M1117.300 7.200v2.600M1119.700 7.200v2.600M1116.400 9.800h4.200v2.400c0 1-.8 1.700-2.100 1.700s-2.100-.7-2.100-1.700zM1118.500 13.900v3.800" stroke-width="1.100"/>
<!-- network -->
<path d="M1144.500 9.800h10.800v8h-10.800zM1150 17.800v3M1146.500 21.300h7"/>
<path d="M1140.500 9.500h4.500v5h-4.500zM1142.700 14.500v6.500h3.800" stroke-width="1.100"/>
<!-- volume -->
<path d="M1164.300 13h2.800l3.600-3.300v11.600l-3.600-3.300h-2.800z" stroke-width="1.100"/>
<path d="M1173.200 12.700c1 1.400 1 4.200 0 5.600M1175.800 10.700c2 2.500 2 7.100 0 9.600M1178.300 8.800c3 3.600 3 9.800 0 13.400" stroke-width="1.100"/>
<!-- pen -->
<path d="M1196.500 21.500l1-3.800 7.200-8.200c.8-.9 2-.9 2.600-.2.700.7.600 1.800-.2 2.600l-7.300 8.100z" stroke-width="1.200"/>
<path d="M1196.800 14.800c-2.600-.2-4.300 1.500-4.300 3.700 0 1.900 1.300 3.200 3.200 3.100M1205.500 14.200c1.600-.2 2.600.5 2.600 1.600" stroke-width="1.200"/>
<!-- notifications -->
<path d="M1326 7.600h14.600v11.400h-5.200l-2.100 2.700-2.100-2.700h-5.200z" stroke-width="1.100"/>
</g>
<path d="M1223.200 21.800v-.9l1-.2 3-12.500h1.500l3 12.500 1 .2v.9h-4.300v-.9l1.100-.2-.6-2.700h-3l-.6 2.700 1.100.2v.9zm2.900-5.200h2.400l-1.200-5.400z" fill="#fff"/>
<circle cx="1254.500" cy="14.300" r="6.700" fill="#0f78e4"/><circle cx="1261.200" cy="17.300" r="2.300" fill="#e53935"/><circle cx="1258.700" cy="19.700" r="1.700" fill="#fbc02d"/>
<rect x="1360" y="0" width="1" height="30" fill="#8a96a3" opacity=".8"/>
</svg>
<div class="abs" style="left:1283px;top:8.500px;font-size:11.500px;line-height:12px;color:#fff;letter-spacing:0">9:56</div>
</div>
</body>
</html>
